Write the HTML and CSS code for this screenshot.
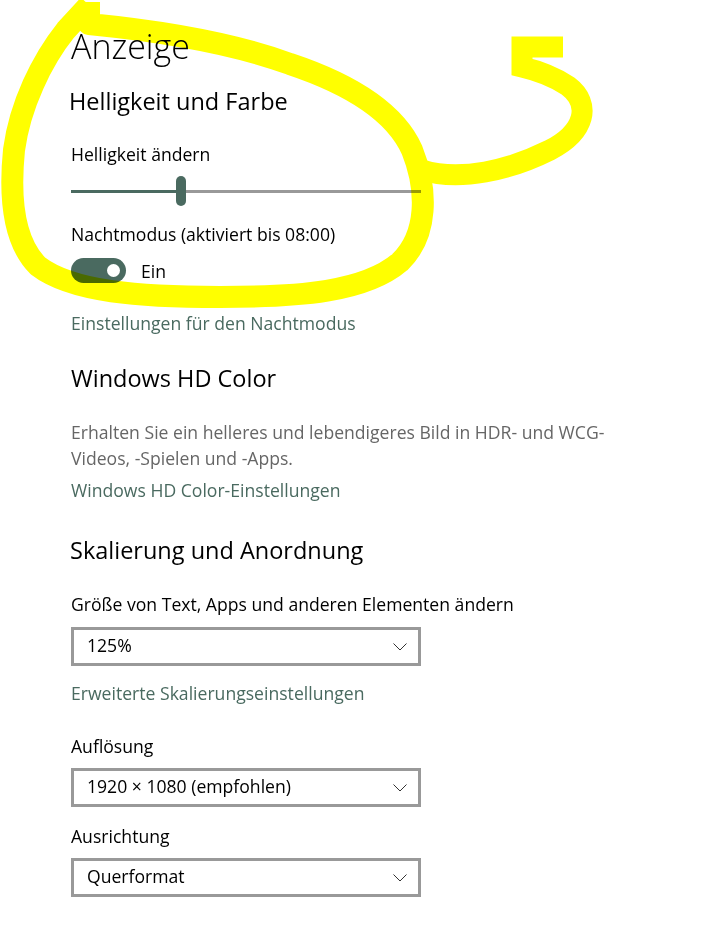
FILE: index.html
```html
<!DOCTYPE html>
<html>
<head>
  <title>Anzeige</title>
  <link rel="stylesheet" href="styles.css">
</head>
<body>
  <div class="page">
    <h1 class="title">Anzeige</h1>

    <h2 class="heading first">Helligkeit und Farbe</h2>
    <div class="label label-top">Helligkeit ändern</div>
    <div class="slider">
      <div class="track-done"></div>
      <div class="thumb"></div>
      <div class="track-rest"></div>
    </div>

    <div class="label label-night">Nachtmodus (aktiviert bis 08:00)</div>
    <div class="toggle-row">
      <div class="toggle"><span class="knob"></span></div>
      <span class="toggle-text">Ein</span>
    </div>
    <a class="link link-night" href="#">Einstellungen für den Nachtmodus</a>

    <h2 class="heading hd">Windows HD Color</h2>
    <p class="desc">Erhalten Sie ein helleres und lebendigeres Bild in HDR- und WCG-Videos, -Spielen und -Apps.</p>
    <a class="link link-hd" href="#">Windows HD Color-Einstellungen</a>

    <h2 class="heading scale">Skalierung und Anordnung</h2>
    <div class="label label-size">Größe von Text, Apps und anderen Elementen ändern</div>
    <div class="select">
      <span>125%</span>
      <svg class="chevron" width="14" height="8" viewBox="0 0 14 8"><polyline points="0.5,0.5 7,7 13.5,0.5" fill="none" stroke="#333" stroke-width="1"/></svg>
    </div>
    <a class="link link-scale" href="#">Erweiterte Skalierungseinstellungen</a>

    <div class="label label-res">Auflösung</div>
    <div class="select">
      <span>1920 × 1080 (empfohlen)</span>
      <svg class="chevron" width="14" height="8" viewBox="0 0 14 8"><polyline points="0.5,0.5 7,7 13.5,0.5" fill="none" stroke="#333" stroke-width="1"/></svg>
    </div>

    <div class="label label-orient">Ausrichtung</div>
    <div class="select">
      <span>Querformat</span>
      <svg class="chevron" width="14" height="8" viewBox="0 0 14 8"><polyline points="0.5,0.5 7,7 13.5,0.5" fill="none" stroke="#333" stroke-width="1"/></svg>
    </div>

    <!-- highlighter scribble drawn over the screenshot -->
    <svg class="scribble" width="707" height="928" viewBox="0 0 707 928">
      <path d="M89 2 L89 24 C150 30 230 42 290 64 C350 84 395 112 412 150 C428 190 428 235 400 262 C365 292 300 297 220 297 C140 297 72 292 38 266 C14 242 9 200 14 150 C20 105 42 60 66 30 L89 5" fill="none" stroke="#ffff00" stroke-width="22" stroke-linejoin="round"/>
      <path d="M422 170 C460 182 510 170 550 150 C585 132 592 104 568 86 C553 76 535 70 522 67 L522 47 L563 47" fill="none" stroke="#ffff00" stroke-width="21" stroke-linejoin="miter"/>
    </svg>
  </div>
</body>
</html>
```

FILE: styles.css
```css
body {
  margin: 0;
  background-color: #fff;
  font-family: "Open Sans", "Liberation Sans", sans-serif;
  color: #000;
}
.page {
  position: relative;
  width: 707px;
  min-height: 928px;
  padding: 24px 0 0 71px;
  box-sizing: border-box;
}
.title {
  margin: 0;
  font-size: 34px;
  font-weight: 300;
  line-height: 45px;
}
.heading {
  margin: 0;
  font-size: 23.5px;
  font-weight: 400;
  line-height: 32px;
}
.heading.first {
  margin-top: 16px;
  margin-left: -2px;
}
.heading.hd {
  margin-top: 26px;
}
.heading.scale {
  margin-top: 31px;
  margin-left: -1px;
}
.label,
.link,
.desc,
.toggle-text {
  font-size: 17.6px;
  line-height: 26px;
}
.label-top {
  margin-top: 24px;
}
.label-night {
  margin-top: 15px;
}
.label-size {
  margin-top: 25px;
}
.label-res {
  margin-top: 27px;
}
.label-orient {
  margin-top: 16px;
}
.slider {
  display: flex;
  align-items: center;
  width: 350px;
  height: 30px;
  margin-top: 9px;
}
.track-done {
  width: 105px;
  height: 3px;
  background-color: #4a6a60;
}
.thumb {
  width: 10px;
  height: 30px;
  border-radius: 5px;
  background-color: #4a6a60;
}
.track-rest {
  flex: 1;
  height: 3px;
  background-color: #999;
}
.toggle-row {
  display: flex;
  align-items: center;
  height: 25px;
  margin-top: 11px;
}
.toggle {
  display: flex;
  align-items: center;
  justify-content: flex-end;
  width: 55px;
  height: 25px;
  padding-right: 6px;
  box-sizing: border-box;
  border-radius: 13px;
  background-color: #4a6a60;
}
.knob {
  width: 13px;
  height: 13px;
  border-radius: 50%;
  background-color: #fff;
}
.toggle-text {
  margin-left: 15px;
}
.link {
  display: block;
  color: #4a6a60;
  text-decoration: none;
}
.link-night {
  margin-top: 27px;
}
.link-hd {
  margin-top: 6px;
}
.link-scale {
  margin-top: 14px;
}
.desc {
  margin: 25px 0 0;
  max-width: 560px;
  color: #666;
}
.select {
  display: flex;
  align-items: center;
  justify-content: space-between;
  width: 350px;
  height: 39px;
  margin-top: 10px;
  padding: 0 11px 2px 13px;
  box-sizing: border-box;
  border: 3px solid #999;
  font-size: 17.6px;
  line-height: 31px;
}
.label-res + .select,
.label-orient + .select {
  margin-top: 9px;
}
.chevron {
  display: block;
  margin-top: 2px;
}
.scribble {
  position: absolute;
  top: 0;
  left: 0;
  pointer-events: none;
  mix-blend-mode: multiply;
}
```
